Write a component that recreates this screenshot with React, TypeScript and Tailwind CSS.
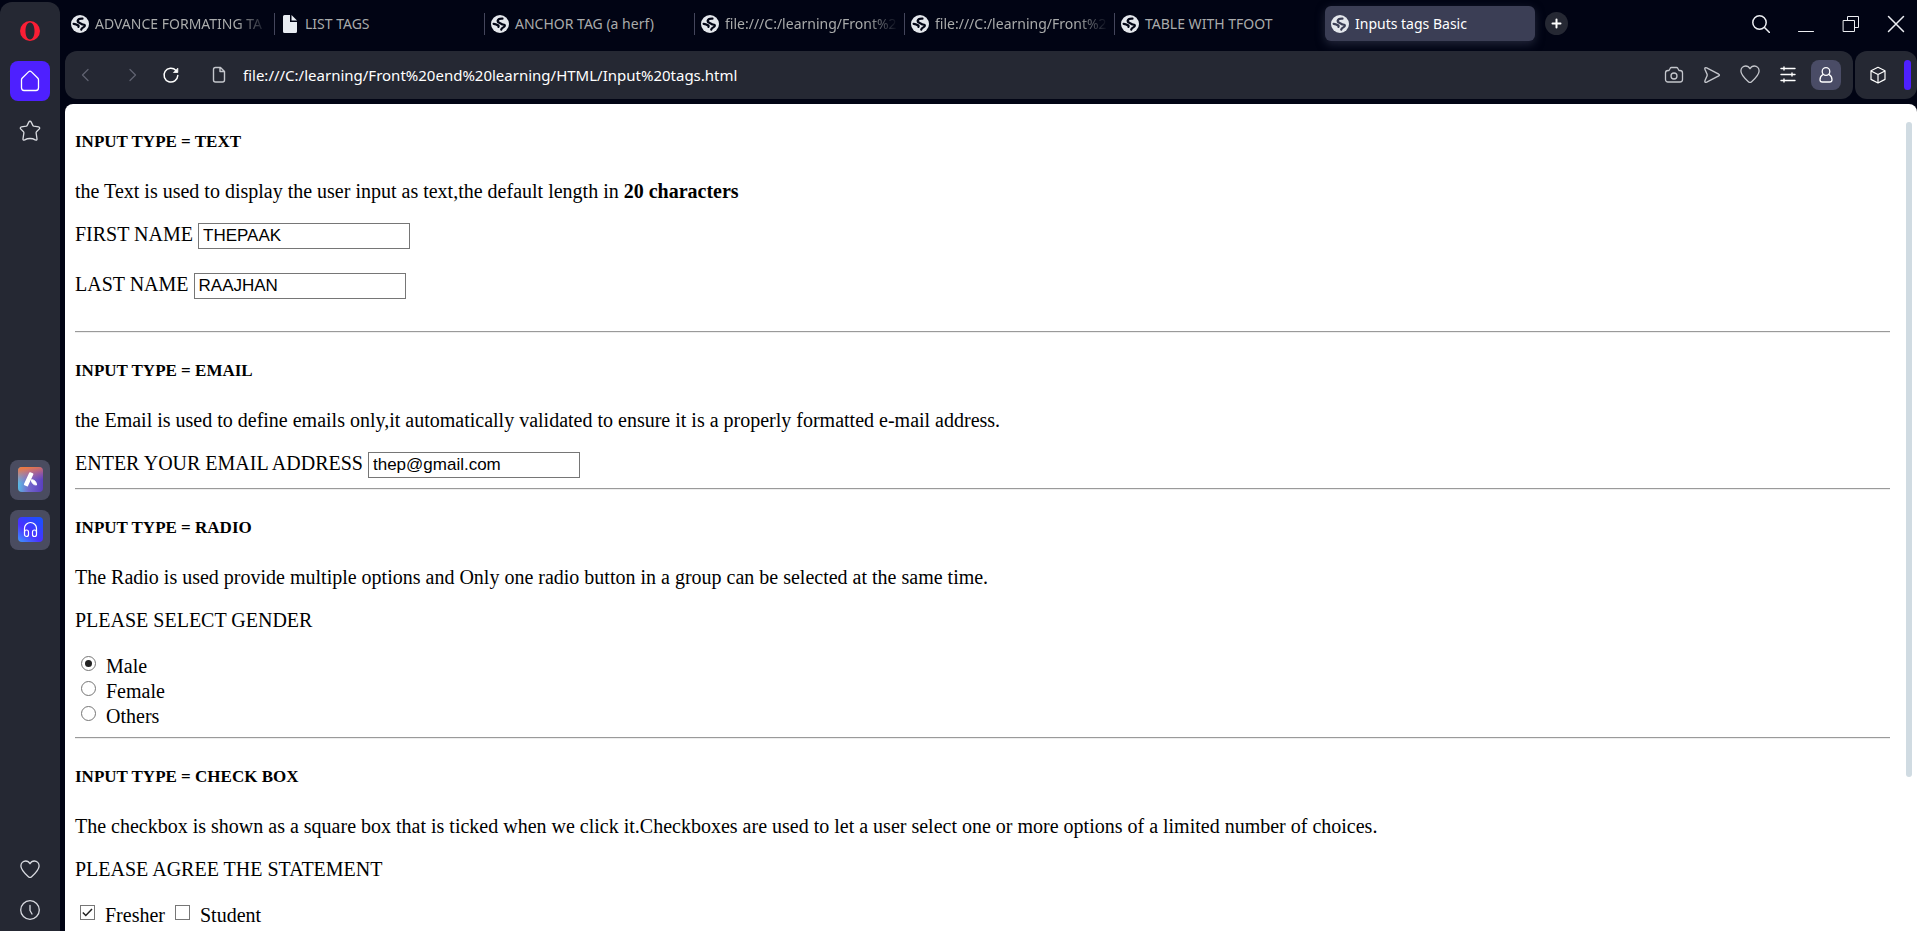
import React from "react";

type IconProps = { className?: string; children: React.ReactNode; size?: number; width?: number };

function Line({ className = "", children, size = 20, width = 1 }: IconProps) {
  return (
    <svg
      className={className}
      width={size}
      height={size}
      viewBox={`0 0 ${size} ${size}`}
      fill="none"
      stroke="currentColor"
      strokeWidth={width}
      strokeLinecap="round"
      strokeLinejoin="round"
      aria-hidden="true"
    >
      {children}
    </svg>
  );
}

function Globe({ dark }: { dark: string }) {
  return (
    <svg className="shrink-0" width="18" height="18" viewBox="0 0 18 18" aria-hidden="true">
      <circle cx="9" cy="9" r="9" fill="#e4e7ec" />
      <g fill="none" stroke={dark} strokeWidth="2.200" strokeLinecap="round" strokeLinejoin="round">
        <path d="M11.500 3.600C9 3.500 6.800 4.600 6.600 6c-.1 1.300 1.600 1.700 2.700 2.200 1.200.6 1.500 1.200 2.800 1.300 1.200.1 2 .6 1.700 1.500-.5 1.500-3 1.300-3.600 3.600" />
        <path d="M2.600 8.800c1.600-.1 2.600.9 4 1.300 1 .3 1.300.9.800 1.700" />
      </g>
    </svg>
  );
}

function FileFilled() {
  return (
    <svg className="shrink-0" width="18" height="18" viewBox="0 0 18 18" aria-hidden="true">
      <path d="M3.500 0H9v7h7v9.500a1.500 1.500 0 0 1-1.500 1.500h-11A1.500 1.500 0 0 1 2 16.500v-15A1.500 1.500 0 0 1 3.500 0z" fill="#e8ecf2" />
      <path d="M10.500 0L16 5.500h-5.500z" fill="#e8ecf2" />
    </svg>
  );
}

type TabData = { title: string; file?: boolean; active?: boolean; divider?: boolean; faded?: boolean };

const tabs: TabData[] = [
  { title: "ADVANCE FORMATING TA", divider: true, faded: true },
  { title: "LIST TAGS", file: true, divider: true },
  { title: "ANCHOR TAG (a herf)", divider: true },
  { title: "file:///C:/learning/Front%2", divider: true, faded: true },
  { title: "file:///C:/learning/Front%2", divider: true, faded: true },
  { title: "TABLE WITH TFOOT" },
  { title: "Inputs tags Basic", active: true },
];

function Tab({ tab }: { tab: TabData }) {
  return (
    <button
      type="button"
      role="tab"
      aria-selected={!!tab.active}
      className={
        tab.active
          ? "flex h-[35px] w-[210px] min-w-0 items-center gap-1.5 rounded-md bg-[#3b3e55] px-1.5 text-white shadow-[0_3px_10px_#3b3e5599]"
          : "flex h-[35px] w-[210px] min-w-0 items-center gap-1.5 pl-1.5 text-[#a9abab]"
      }
    >
      {tab.file ? <FileFilled /> : <Globe dark={tab.active ? "#3b3e55" : "#010414"} />}
      <span
        className={
          tab.faded
            ? "min-w-0 flex-1 whitespace-nowrap text-left [mask-image:linear-gradient(to_right,black_82%,transparent)]"
            : "min-w-0 flex-1 whitespace-nowrap text-left"
        }
      >
        {tab.title}
      </span>
      {!tab.active && <span className={tab.divider ? "h-[22px] w-px bg-[#44465c]" : "w-px"} />}
    </button>
  );
}

function Sidebar() {
  return (
    <nav aria-label="Sidebar" className="mt-0.5 flex w-[60px] shrink-0 flex-col items-center rounded-t-xl bg-[#252833] pb-2.5 text-[#d8dae0]">
      <button type="button" aria-label="Menu" className="mt-[19px]">
        <svg width="20" height="20" viewBox="0 0 20 20" aria-hidden="true">
          <path
            fillRule="evenodd"
            d="M10 0a10 10 0 1 0 0 20 10 10 0 0 0 0-20zM10 1.500c2.900 0 4.500 3.800 4.500 8.500s-1.600 8.500-4.500 8.500S5.500 14.700 5.500 10 7.100 1.500 10 1.500z"
            fill="#fa1e35"
          />
        </svg>
      </button>
      <button type="button" aria-label="Home" className="mt-5 flex size-10 items-center justify-center rounded-lg bg-[#4e20ff] text-white">
        <Line size={22} width={1.3}>
          <path d="M2.500 9.800c0-.7.300-1.300.8-1.800L9.500 1.900c.8-.8 2.200-.8 3 0L18.700 8c.5.500.8 1.100.8 1.800v8c0 1.500-.9 2.700-2.500 2.700H5c-1.600 0-2.500-1.200-2.500-2.700z" />
        </Line>
      </button>
      <button type="button" aria-label="Bookmarks" className="mt-[19px]">
        <Line size={22} width={1.3}>
          <path d="M9.900 1.900c.4-.9 1.800-.9 2.200 0l1.700 3.500c.2.400.5.600.9.700l4.900.7c1 .2 1.500 1.400.7 2.100l-2.800 2.900c-.3.300-.4.700-.4 1.100l.9 5.900c.2 1-.6 1.700-1.500 1.200-1.200-.7-2.300-1.500-5.500-1.500s-4.300.8-5.500 1.500c-.9.500-1.700-.2-1.500-1.200l.9-5.900c0-.4-.1-.8-.4-1.100L1.700 8.900C.9 8.200 1.400 7 2.400 6.800l4.900-.7c.4-.1.7-.3.9-.7z" />
        </Line>
      </button>
      <div className="flex-1" />
      <button type="button" aria-label="Aria" className="mt-2 flex size-10 items-center justify-center rounded-lg bg-[#4a4c60]">
        <svg width="25" height="25" viewBox="0 0 25 25" aria-hidden="true">
          <defs>
            <linearGradient id="aria" x1="0" y1="0.600" x2="1" y2="0.700">
              <stop offset="0" stopColor="#58bfe6" />
              <stop offset="0.450" stopColor="#7468cc" />
              <stop offset="1" stopColor="#5a3fc0" />
            </linearGradient>
            <linearGradient id="ariaGlow" x1="0.400" y1="0" x2="0.500" y2="0.600">
              <stop offset="0" stopColor="#f07840" />
              <stop offset="1" stopColor="#c060a0" stopOpacity="0" />
            </linearGradient>
          </defs>
          <rect width="25" height="25" rx="4" fill="url(#aria)" />
          <rect width="25" height="25" rx="4" fill="url(#ariaGlow)" />
          <path d="M12 6.200l2.500 1L9.200 18.500 6.800 17.400z" fill="#fff" stroke="#fff" strokeWidth="1.800" strokeLinejoin="round" />
          <path d="M13.300 12.800c2.700-.3 5.200 2 5.200 5.200-2.700.2-5.100-2-5.200-5.200z" fill="#fff" stroke="#fff" strokeLinejoin="round" />
        </svg>
      </button>
      <button type="button" aria-label="Player" className="mt-2.5 flex size-10 items-center justify-center rounded-lg bg-[#4a4c60]">
        <svg width="25" height="25" viewBox="0 0 25 25" fill="none" aria-hidden="true">
          <defs>
            <linearGradient id="player" x1="0" y1="1" x2="0.800" y2="0">
              <stop offset="0" stopColor="#3d9bff" />
              <stop offset="0.450" stopColor="#4a30ff" />
              <stop offset="1" stopColor="#1c50ff" />
            </linearGradient>
          </defs>
          <rect width="25" height="25" rx="4" fill="url(#player)" />
          <g stroke="#fff" strokeWidth="1.200">
            <path d="M6.500 15.500V11.500a6 6 0 0 1 12 0v4" />
            <rect x="6.500" y="13" width="4" height="6.500" rx="2" />
            <rect x="14.500" y="13" width="4" height="6.500" rx="2" />
          </g>
        </svg>
      </button>
      <div className="flex-1" />
      <button type="button" aria-label="Favourites">
        <Heart />
      </button>
      <button type="button" aria-label="History" className="mt-[18px]">
        <Line size={22} width={1.3}>
          <circle cx="11" cy="11" r="9.300" />
          <path d="M11 6.500v5l2 3.500" />
        </Line>
      </button>
    </nav>
  );
}

function Heart() {
  return (
    <Line size={22} width={1.3}>
      <path d="M11 4.800C9.900 2.800 8.300 2 6.700 2 4 2 1.900 4.100 1.900 6.900c0 3.800 3.700 7.300 7.500 10.800.9.800 2.300.8 3.200 0 3.800-3.500 7.500-7 7.500-10.800C20.100 4.100 18 2 15.300 2c-1.600 0-3.200.8-4.300 2.800z" />
    </Line>
  );
}

function TabStrip() {
  return (
    <header className="flex h-[51px] shrink-0 items-center">
      <div role="tablist" className="-mt-1 flex min-w-0">
        {tabs.map((tab, i) => (
          <Tab key={i} tab={tab} />
        ))}
      </div>
      <button type="button" aria-label="New tab" className="-mt-1 ml-2.5 flex size-[23px] shrink-0 items-center justify-center rounded-full bg-[#252833] text-white">
        <Line size={11} width={2}>
          <path d="M5.500 1.500v8M1.500 5.500h8" />
        </Line>
      </button>
      <div className="-mt-1 ml-auto flex shrink-0 items-center gap-[27px] pr-3 text-[#eceef2]">
        <button type="button" aria-label="Search tabs">
          <Line size={18} width={1.5}>
            <circle cx="7.500" cy="7.500" r="6.700" />
            <path d="M12.500 12.500l5 5" />
          </Line>
        </button>
        <button type="button" aria-label="Minimize">
          <Line size={18}>
            <path d="M1.500 16.500h15" />
          </Line>
        </button>
        <button type="button" aria-label="Restore">
          <Line size={18}>
            <path d="M1.500 5.500h11v11h-11zM5.500 5.500v-4h11v11h-4" />
          </Line>
        </button>
        <button type="button" aria-label="Close">
          <Line size={18} width={1.5}>
            <path d="M1.500 1.500l15 15M16.500 1.500l-15 15" />
          </Line>
        </button>
      </div>
    </header>
  );
}

function Toolbar() {
  return (
    <div className="flex h-12 shrink-0 gap-0.5">
      <div className="flex min-w-0 flex-1 items-center rounded-xl bg-[#252833] pl-2.5 pr-3 text-[#c4c6cc]">
        <button type="button" aria-label="Back" className="text-[#5f6270]">
          <Line size={20} width={1.3}>
            <path d="M13 4.500L7.500 10l5.500 5.500" />
          </Line>
        </button>
        <button type="button" aria-label="Forward" className="ml-7 text-[#5f6270]">
          <Line size={20} width={1.3}>
            <path d="M7 4.500l5.500 5.500L7 15.500" />
          </Line>
        </button>
        <button type="button" aria-label="Reload" className="ml-[18px] text-white">
          <Line size={20} width={1.5}>
            <path d="M16.800 10.500A6.900 6.900 0 1 1 15 5.500" />
            <path d="M16.800 3.500v4h-4z" fill="currentColor" strokeWidth="0.800" />
          </Line>
        </button>
        <Line size={20} width={1.4} className="ml-7 shrink-0">
          <path d="M4.500 4.500a2 2 0 0 1 2-2h5l4 4v8.500a2 2 0 0 1-2 2h-7a2 2 0 0 1-2-2zM11 3v3.500h4" />
        </Line>
        <input
          aria-label="Address"
          defaultValue="file:///C:/learning/Front%20end%20learning/HTML/Input%20tags.html"
          className="ml-3.5 min-w-0 flex-1 bg-transparent text-[15px] text-white outline-none"
        />
        <div className="flex items-center gap-4">
          <button type="button" aria-label="Snapshot">
            <Line size={22} width={1.3}>
              <path d="M2.500 9c0-1.500 1-2.500 2.500-2.500h1L7.300 4.200c.3-.5.700-.7 1.200-.7h5c.5 0 .9.200 1.200.7L16 6.500h1c1.500 0 2.500 1 2.500 2.500v6.500c0 1.500-1 2.500-2.500 2.500H5c-1.500 0-2.500-1-2.500-2.500z" />
              <circle cx="11" cy="12" r="3" />
            </Line>
          </button>
          <button type="button" aria-label="My Flow">
            <Line size={22} width={1.4}>
              <path d="M4 5.500c-.6-1.500.4-2.300 1.700-1.700l12 6.300c.9.400.9 1.400 0 1.800l-12 6.300c-1.300.6-2.300-.2-1.700-1.700l2-4.500c.3-.7.300-1.300 0-2z" />
            </Line>
          </button>
          <button type="button" aria-label="Add to bookmarks">
            <Heart />
          </button>
          <button type="button" aria-label="Easy setup" className="text-white">
            <Line size={22} width={1.4}>
              <path d="M4 4.500h14M4 10.500h14M4 16.500h14M7 3v3M15 9v3M7 15v3" />
            </Line>
          </button>
        </div>
        <button type="button" aria-label="Profile" className="ml-3 flex size-[30px] items-center justify-center rounded-lg bg-[#4a4c66] text-white">
          <Line size={20} width={1.3}>
            <circle cx="10" cy="6.500" r="3.800" />
            <path d="M7 9.500c-1.800 1-3 3-3 5.200 0 1.500.9 2.300 2.300 2.300h7.400c1.400 0 2.300-.8 2.300-2.300 0-2.200-1.200-4.200-3-5.200" />
          </Line>
        </button>
      </div>
      <div className="flex w-[62px] shrink-0 items-center justify-between rounded-xl bg-[#252833] pl-3 pr-1.5 text-white">
        <button type="button" aria-label="Extensions">
          <Line size={22} width={1.2}>
            <path d="M11 3.300l7 3.500v8.600l-7 3.600-7-3.600V6.800zM4.500 7.200l6.500 3.300 6.500-3.300M11 10.500V19" />
          </Line>
        </button>
        <span className="h-[30px] w-[7px] rounded-full bg-[#4e20ff]" />
      </div>
    </div>
  );
}

function Heading({ children }: { children: React.ReactNode }) {
  return <h5 className="text-[17px] font-bold leading-5">{children}</h5>;
}

function Rule() {
  return <hr className="h-0.5 border-t border-b border-t-[#9a9a9a] border-b-[#eeeeee]" />;
}

function Field({ id, label, type, value }: { id: string; label: string; type: string; value: string }) {
  return (
    <div className="flex h-[26px] items-baseline gap-[5px]">
      <label htmlFor={id}>{label}</label>
      <input
        id={id}
        type={type}
        defaultValue={value}
        className="h-[26px] w-[212px] border border-[#767676] bg-white px-1 font-['Liberation_Sans',Arial,sans-serif] text-[17px] leading-6 outline-none"
      />
    </div>
  );
}

function Radio({ id, label, checked }: { id: string; label: string; checked?: boolean }) {
  return (
    <div className="flex h-[25px] items-start gap-2.5 pl-1.5">
      <span className="grid size-[15px] place-items-center">
        <input
          id={id}
          name="gender"
          type="radio"
          defaultChecked={checked}
          className="peer col-start-1 row-start-1 size-[15px] appearance-none rounded-full border border-[#767676] bg-white"
        />
        <span className="pointer-events-none col-start-1 row-start-1 hidden size-[7px] rounded-full bg-[#222] peer-checked:block" />
      </span>
      <label htmlFor={id} className="leading-5">
        {label}
      </label>
    </div>
  );
}

function Checkbox({ id, label, checked }: { id: string; label: string; checked?: boolean }) {
  return (
    <div className="flex items-start gap-2.5">
      <span className="grid size-[15px] place-items-center">
        <input
          id={id}
          type="checkbox"
          defaultChecked={checked}
          className="peer col-start-1 row-start-1 size-[15px] appearance-none border border-[#767676] bg-white"
        />
        <svg className="pointer-events-none col-start-1 row-start-1 hidden peer-checked:block" width="11" height="11" viewBox="0 0 11 11" fill="none" stroke="#222" strokeWidth="1.500" aria-hidden="true">
          <path d="M.800 5.500l3 3L10 2" />
        </svg>
      </span>
      <label htmlFor={id} className="leading-5">
        {label}
      </label>
    </div>
  );
}

function Page() {
  return (
    <main className="flex min-h-0 flex-1 overflow-hidden rounded-t-lg bg-white">
      <form className="min-w-0 flex-1 px-2.5 font-['Liberation_Serif','Times_New_Roman',serif] text-[20px] leading-[23px] text-black">
        <section className="flex flex-col pb-8 pt-7">
          <Heading>INPUT TYPE = TEXT</Heading>
          <p className="mt-7">
            the Text is used to display the user input as text,the default length in <b>20 characters</b>
          </p>
          <div className="mt-5 flex flex-col gap-6">
            <Field id="first" label="FIRST NAME" type="text" value="THEPAAK" />
            <Field id="last" label="LAST NAME" type="text" value="RAAJHAN" />
          </div>
        </section>
        <Rule />
        <section className="flex flex-col pb-2.5 pt-7">
          <Heading>INPUT TYPE = EMAIL</Heading>
          <p className="mt-7">the Email is used to define emails only,it automatically validated to ensure it is a properly formatted e-mail address.</p>
          <div className="mt-5">
            <Field id="email" label="ENTER YOUR EMAIL ADDRESS" type="email" value="thep@gmail.com" />
          </div>
        </section>
        <Rule />
        <section className="flex flex-col pb-1.5 pt-7">
          <Heading>INPUT TYPE = RADIO</Heading>
          <p className="mt-7">The Radio is used provide multiple options and Only one radio button in a group can be selected at the same time.</p>
          <p className="mt-5">PLEASE SELECT GENDER</p>
          <div className="mt-6">
            <Radio id="male" label="Male" checked />
            <Radio id="female" label="Female" />
            <Radio id="others" label="Others" />
          </div>
        </section>
        <Rule />
        <section className="flex flex-col pt-7">
          <Heading>INPUT TYPE = CHECK BOX</Heading>
          <p className="mt-7">
            The checkbox is shown as a square box that is ticked when we click it.Checkboxes are used to let a user select one or more options of a limited number of choices.
          </p>
          <p className="mt-5">PLEASE AGREE THE STATEMENT</p>
          <div className="mt-6 flex gap-2.5 pl-[5px]">
            <Checkbox id="fresher" label="Fresher" checked />
            <Checkbox id="student" label="Student" />
          </div>
        </section>
      </form>
      <div className="w-[17px] shrink-0 pl-1.5 pt-[18px]" aria-hidden="true">
        <div className="h-[81%] w-1.5 rounded-full bg-[#d0dbe2]" />
      </div>
    </main>
  );
}

export default function App() {
  return (
    <div className="flex h-screen gap-[5px] overflow-hidden bg-[#010414] font-['Noto_Sans','Open_Sans',sans-serif] text-[14px]">
      <Sidebar />
      <div className="flex min-w-0 flex-1 flex-col">
        <TabStrip />
        <Toolbar />
        <div className="h-[5px] shrink-0" />
        <Page />
      </div>
    </div>
  );
}
